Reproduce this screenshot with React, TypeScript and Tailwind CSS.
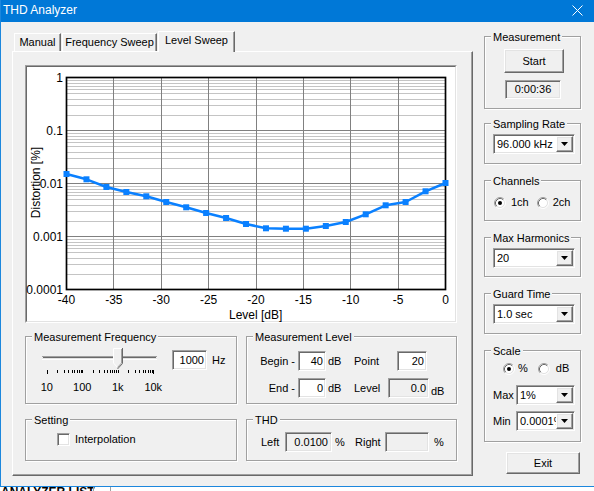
import React from "react";

const sunken =
  "border border-t-[#a0a0a0] border-l-[#a0a0a0] border-r-white border-b-white shadow-[inset_1px_1px_0_#696969,inset_-1px_-1px_0_#e3e3e3]";
const raised =
  "border border-t-white border-l-white border-r-[#696969] border-b-[#696969] shadow-[inset_-1px_-1px_0_#a0a0a0,inset_1px_1px_0_#e3e3e3]";

function Group({ label, className, children }: { label: string; className: string; children?: React.ReactNode }) {
  return (
    <div className={`relative border border-[#a0a0a0] shadow-[1px_1px_0_#fff,inset_1px_1px_0_#fff] ${className}`}>
      <span className="absolute left-[6px] top-[-6px] bg-[#f0f0f0] px-[2px] leading-[13px] whitespace-nowrap">{label}</span>
      {children}
    </div>
  );
}

function Edit({ value, className, ro }: { value?: string; className: string; ro?: boolean }) {
  return (
    <div
      className={`${sunken} ${ro ? "bg-[#f0f0f0]" : "bg-white"} h-[20px] flex items-center justify-end pr-[2px] whitespace-nowrap ${className}`}
    >
      {value}
    </div>
  );
}

function Arrow() {
  return (
    <svg width="7" height="4" className="block">
      <path d="M0 0H7L3.5 4Z" fill="#000" />
    </svg>
  );
}

function Combo({ value, className }: { value: string; className: string }) {
  return (
    <div className={`flex h-[20px] ${sunken} bg-white p-[1px] ${className}`}>
      <span className="flex-1 overflow-hidden whitespace-nowrap pl-[2px] leading-[16px]">{value}</span>
      <span className={`w-[17px] h-full flex items-center justify-center bg-[#f0f0f0] ${raised}`}>
        <Arrow />
      </span>
    </div>
  );
}

function Radio({ checked }: { checked?: boolean }) {
  return (
    <svg width="12" height="12" viewBox="0 0 12 12" className="block shrink-0">
      <circle cx="6" cy="6" r="4.5" fill="#fff" />
      <path d="M2.11 9.89A5.5 5.5 0 0 1 9.89 2.11" fill="none" stroke="#a0a0a0" />
      <path d="M9.89 2.11A5.5 5.5 0 0 1 2.11 9.89" fill="none" stroke="#ffffff" />
      <path d="M2.82 9.18A4.5 4.5 0 0 1 9.18 2.82" fill="none" stroke="#696969" />
      <path d="M9.18 2.82A4.5 4.5 0 0 1 2.82 9.18" fill="none" stroke="#e3e3e3" />
      {checked && <circle cx="6" cy="6" r="2" fill="#000" />}
    </svg>
  );
}

function Chart() {
  const PL = 39.5,
    PR = 418.5,
    PT = 10.5,
    PB = 222.5;
  const W = PR - PL;
  const dec = 53;
  const font = "Liberation Sans, Arial, sans-serif";
  const majorX = [1, 2, 3, 4, 5, 6, 7].map((k) => Math.floor(PL + (k * W) / 8) + 0.5);
  const minorY: number[] = [];
  for (let d = 0; d < 4; d++) for (let m = 2; m <= 9; m++) minorY.push(Math.round(PT + dec * (d + 1) - dec * Math.log10(m)) + 0.5);
  const majorY = [1, 2, 3].map((d) => PT + dec * d);
  const ys = [107, 112.3, 120, 125, 129.3, 135, 140.3, 146, 151, 157, 161.3, 161.7, 161.7, 159, 155, 147.3, 138.3, 135, 124.3, 116];
  const pts = ys.map((y, i) => [PL + (i * W) / 19, y]);
  const yLabels = ["1", "0.1", "0.01", "0.001", "0.0001"];
  const xLabels = ["-40", "-35", "-30", "-25", "-20", "-15", "-10", "-5", "0"];
  return (
    <svg width="428" height="254" className="block overflow-visible">
      {minorY.map((y, i) => (
        <line key={"m" + i} x1={PL} x2={PR} y1={y} y2={y} stroke="#c4c4c4" strokeWidth="1" />
      ))}
      {majorY.map((y, i) => (
        <line key={"h" + i} x1={PL} x2={PR} y1={y} y2={y} stroke="#808080" strokeWidth="1" />
      ))}
      {majorX.map((x, i) => (
        <line key={"v" + i} x1={x} x2={x} y1={PT} y2={PB} stroke="#808080" strokeWidth="1" />
      ))}
      <rect x={PL} y={PT} width={W} height={PB - PT} fill="none" stroke="#000" strokeWidth="1.7" />
      <polyline
        points={pts.map((p) => p.join(",")).join(" ")}
        fill="none"
        stroke="#0a80ff"
        strokeWidth="2.5"
        strokeLinejoin="round"
      />
      {pts.map((p, i) => (
        <rect key={"p" + i} x={p[0] - 3} y={p[1] - 3} width="6" height="6" fill="#0a80ff" />
      ))}
      {yLabels.map((t, i) => (
        <text key={"yl" + i} x="36" y={PT + dec * i + 4.3} textAnchor="end" fontSize="12" fontFamily={font} fill="#000">
          {t}
        </text>
      ))}
      {xLabels.map((t, i) => (
        <text key={"xl" + i} x={PL + (i * W) / 8} y="237" textAnchor="middle" fontSize="12" fontFamily={font} fill="#000">
          {t}
        </text>
      ))}
      <text x="228.7" y="252" textAnchor="middle" fontSize="12" fontFamily={font} fill="#000">
        Level [dB]
      </text>
      <text transform="translate(12.5,115.5) rotate(-90)" textAnchor="middle" fontSize="12" fontFamily={font} fill="#000">
        Distortion [%]
      </text>
    </svg>
  );
}

function Slider() {
  const ticks: number[] = [];
  for (let d = 0; d < 3; d++) for (let m = 1; m < 10; m++) ticks.push(d + Math.log10(m));
  ticks.push(3);
  return (
    <svg className="block ml-[8px] mt-[9px]" width="130" height="30">
      <line x1="5" y1="10.5" x2="120" y2="10.5" stroke="#a0a0a0" />
      <line x1="6" y1="11.5" x2="119" y2="11.5" stroke="#696969" />
      <line x1="5" y1="12.5" x2="120" y2="12.5" stroke="#e3e3e3" />
      <line x1="5" y1="13.5" x2="120" y2="13.5" stroke="#ffffff" />
      {ticks.map((t, i) => {
        const x = Math.round(9.7 + 35.5 * t) + 0.5;
        const long = i === 0 || i === ticks.length - 1;
        return <line key={i} x1={x} x2={x} y1="24" y2={long ? 28 : 27} stroke="#000" />;
      })}
      <polygon points="76.5,2.5 84.5,2.5 84.5,17 80.5,21.5 76.5,17" fill="#f0f0f0" />
      <polyline points="76.5,17 76.5,2.5 84.5,2.5" fill="none" stroke="#ffffff" />
      <polyline points="76.5,17 80.5,21.5" fill="none" stroke="#ffffff" />
      <polyline points="84.5,3 84.5,17 80.5,21.5" fill="none" stroke="#a0a0a0" />
      <polyline points="85.5,2 85.5,17.5 80.5,23" fill="none" stroke="#696969" />
    </svg>
  );
}

export default function App() {
  const tabBase =
    "bg-[#f0f0f0] border-t border-l border-r border-t-white border-l-white border-r-[#696969] shadow-[inset_-1px_0_0_#a0a0a0] flex justify-center pt-[2px] whitespace-nowrap";
  return (
    <div className="w-[594px] h-[491px] overflow-hidden bg-white text-[11px] leading-[13px] text-black font-['Liberation_Sans',Arial,sans-serif]">
      <div className="h-[487px] flex flex-col border-l border-b border-[#1c87dd] bg-[#f0f0f0]">
        {/* Title bar */}
        <div className="h-[22px] shrink-0 bg-[#0078d7] flex items-start justify-between text-white">
          <span className="pl-[2px] pt-[3px] text-[12px] leading-[14px]">THD Analyzer</span>
          <svg className="block mt-[5px] mr-[11px]" width="11" height="11">
            <path d="M0.5 0.5L10.5 10.5M10.5 0.5L0.5 10.5" stroke="#fff" strokeWidth="1" />
          </svg>
        </div>

        <div className="flex">
          {/* Left: tab control */}
          <div className="ml-[11px] mt-[9px] w-[461px] flex flex-col">
            <div className="h-[20px] flex items-end">
              <div className={`${tabBase} ml-[2px] w-[47px] h-[18px]`}>Manual</div>
              <div className={`${tabBase} ml-[1px] w-[95px] h-[18px]`}>Frequency Sweep</div>
              <div className={`${tabBase} ml-[1px] w-[77px] h-[21px] mb-[-1px] relative z-10`}>Level Sweep</div>
            </div>
            <div className="h-[425px] flex flex-col border-t border-l border-r border-b border-t-white border-l-white border-r-[#696969] border-b-[#696969] shadow-[inset_-1px_-1px_0_#a0a0a0] pt-[13px] pl-[12px]">
              {/* Chart */}
              <div className="w-[432px] h-[258px] border border-t-[#a0a0a0] border-l-[#a0a0a0] border-r-white border-b-white">
                <div className="w-full h-full bg-white border border-t-[#696969] border-l-[#696969] border-r-[#e3e3e3] border-b-[#e3e3e3]">
                  <Chart />
                </div>
              </div>

              {/* Row 1 */}
              <div className="flex mt-[13px]">
                <Group label="Measurement Frequency" className="w-[212px] h-[68px]">
                  <div className="flex pl-[3px]">
                    <div className="w-[143px] flex flex-col">
                      <Slider />
                      <div className="flex mt-[5px]">
                        <span className="w-[35.5px] text-center">10</span>
                        <span className="w-[35.5px] text-center">100</span>
                        <span className="w-[35.5px] text-center">1k</span>
                        <span className="w-[35.5px] text-center">10k</span>
                      </div>
                    </div>
                    <div className="flex items-center mt-[13px] h-[20px]">
                      <Edit value="1000" className="w-[35px]" />
                      <span className="ml-[5px]">Hz</span>
                    </div>
                  </div>
                </Group>
                <Group label="Measurement Level" className="ml-[9px] w-[211px] h-[68px]">
                  <div className="pt-[14px] flex flex-col">
                    <div className="flex items-center h-[20px]">
                      <span className="w-[51px] text-right pr-[3px] whitespace-nowrap">Begin -</span>
                      <Edit value="40" className="w-[28px]" />
                      <span className="ml-[2px] w-[26px]">dB</span>
                      <span className="w-[43px]">Point</span>
                      <Edit value="20" className="w-[30px]" />
                    </div>
                    <div className="flex items-center h-[20px] mt-[7px]">
                      <span className="w-[51px] text-right pr-[3px] whitespace-nowrap">End -</span>
                      <Edit value="0" className="w-[28px]" />
                      <span className="ml-[2px] w-[26px]">dB</span>
                      <span className="w-[34px]">Level</span>
                      <Edit value="0.0" className="w-[41px]" ro />
                      <span className="ml-[2px] mt-[6px]">dB</span>
                    </div>
                  </div>
                </Group>
              </div>

              {/* Row 2 */}
              <div className="flex mt-[15px]">
                <Group label="Setting" className="w-[212px] h-[42px]">
                  <div className="flex items-center pl-[31px] pt-[13px]">
                    <div className={`w-[13px] h-[13px] bg-white ${sunken}`} />
                    <span className="ml-[5px]">Interpolation</span>
                  </div>
                </Group>
                <Group label="THD" className="ml-[9px] w-[211px] h-[42px]">
                  <div className="flex items-center pt-[12px] pl-[14px]">
                    <span className="w-[24px]">Left</span>
                    <Edit value="0.0100" className="w-[47px] pr-[3px]" ro />
                    <span className="ml-[3px] w-[20px]">%</span>
                    <span className="w-[30px]">Right</span>
                    <Edit value="" className="w-[44px]" ro />
                    <span className="ml-[5px]">%</span>
                  </div>
                </Group>
              </div>
            </div>
          </div>

          {/* Right column */}
          <div className="ml-[11px] w-[97px] flex flex-col">
            <Group label="Measurement" className="mt-[14px] w-[97px] h-[73px]">
              <div className="flex flex-col items-start pt-[12px]">
                <div className={`ml-[19px] w-[60px] h-[24px] bg-[#f0f0f0] flex items-center justify-center ${raised}`}>Start</div>
                <div className={`ml-[20px] mt-[7px] w-[56px] h-[19px] bg-[#f0f0f0] flex items-center justify-center ${sunken}`}>
                  0:00:36
                </div>
              </div>
            </Group>
            <Group label="Sampling Rate" className="mt-[14px] w-[97px] h-[41px]">
              <div className="pl-[8px] pt-[10px]">
                <Combo value="96.000 kHz" className="w-[82px]" />
              </div>
            </Group>
            <Group label="Channels" className="mt-[16px] w-[97px] h-[41px]">
              <div className="flex items-center pl-[9px] pt-[15px]">
                <Radio checked />
                <span className="ml-[5px]">1ch</span>
                <span className="ml-[8px]">
                  <Radio />
                </span>
                <span className="ml-[4px]">2ch</span>
              </div>
            </Group>
            <Group label="Max Harmonics" className="mt-[16px] w-[97px] h-[40px]">
              <div className="pl-[8px] pt-[10px]">
                <Combo value="20" className="w-[82px]" />
              </div>
            </Group>
            <Group label="Guard Time" className="mt-[16px] w-[97px] h-[41px]">
              <div className="pl-[8px] pt-[10px]">
                <Combo value="1.0 sec" className="w-[82px]" />
              </div>
            </Group>
            <Group label="Scale" className="mt-[16px] w-[97px] h-[92px]">
              <div className="flex flex-col pt-[11px]">
                <div className="flex items-center pl-[18px]">
                  <Radio checked />
                  <span className="ml-[3px]">%</span>
                  <span className="ml-[10px]">
                    <Radio />
                  </span>
                  <span className="ml-[6px]">dB</span>
                </div>
                <div className="flex items-center pl-[8px] mt-[10px]">
                  <span className="w-[23px]">Max</span>
                  <Combo value="1%" className="w-[59px]" />
                </div>
                <div className="flex items-center pl-[8px] mt-[6px]">
                  <span className="w-[23px]">Min</span>
                  <Combo value="0.0001%" className="w-[59px]" />
                </div>
              </div>
            </Group>
            <div className={`ml-[22px] mt-[10px] w-[74px] h-[22px] bg-[#f0f0f0] flex items-center justify-center ${raised}`}>Exit</div>
          </div>
        </div>
      </div>
      {/* Strip of what lies below the window */}
      <div className="h-[4px] flex bg-white overflow-hidden">
        <span className="w-[93px] pl-[1px] mt-[-1px] font-bold text-[12px] leading-[12px] whitespace-nowrap">ANALYZER LIST</span>
        <span className="w-[17px] border-l border-[#a0a0a0]" />
        <span className="border-l border-[#a0a0a0]" />
      </div>
    </div>
  );
}
